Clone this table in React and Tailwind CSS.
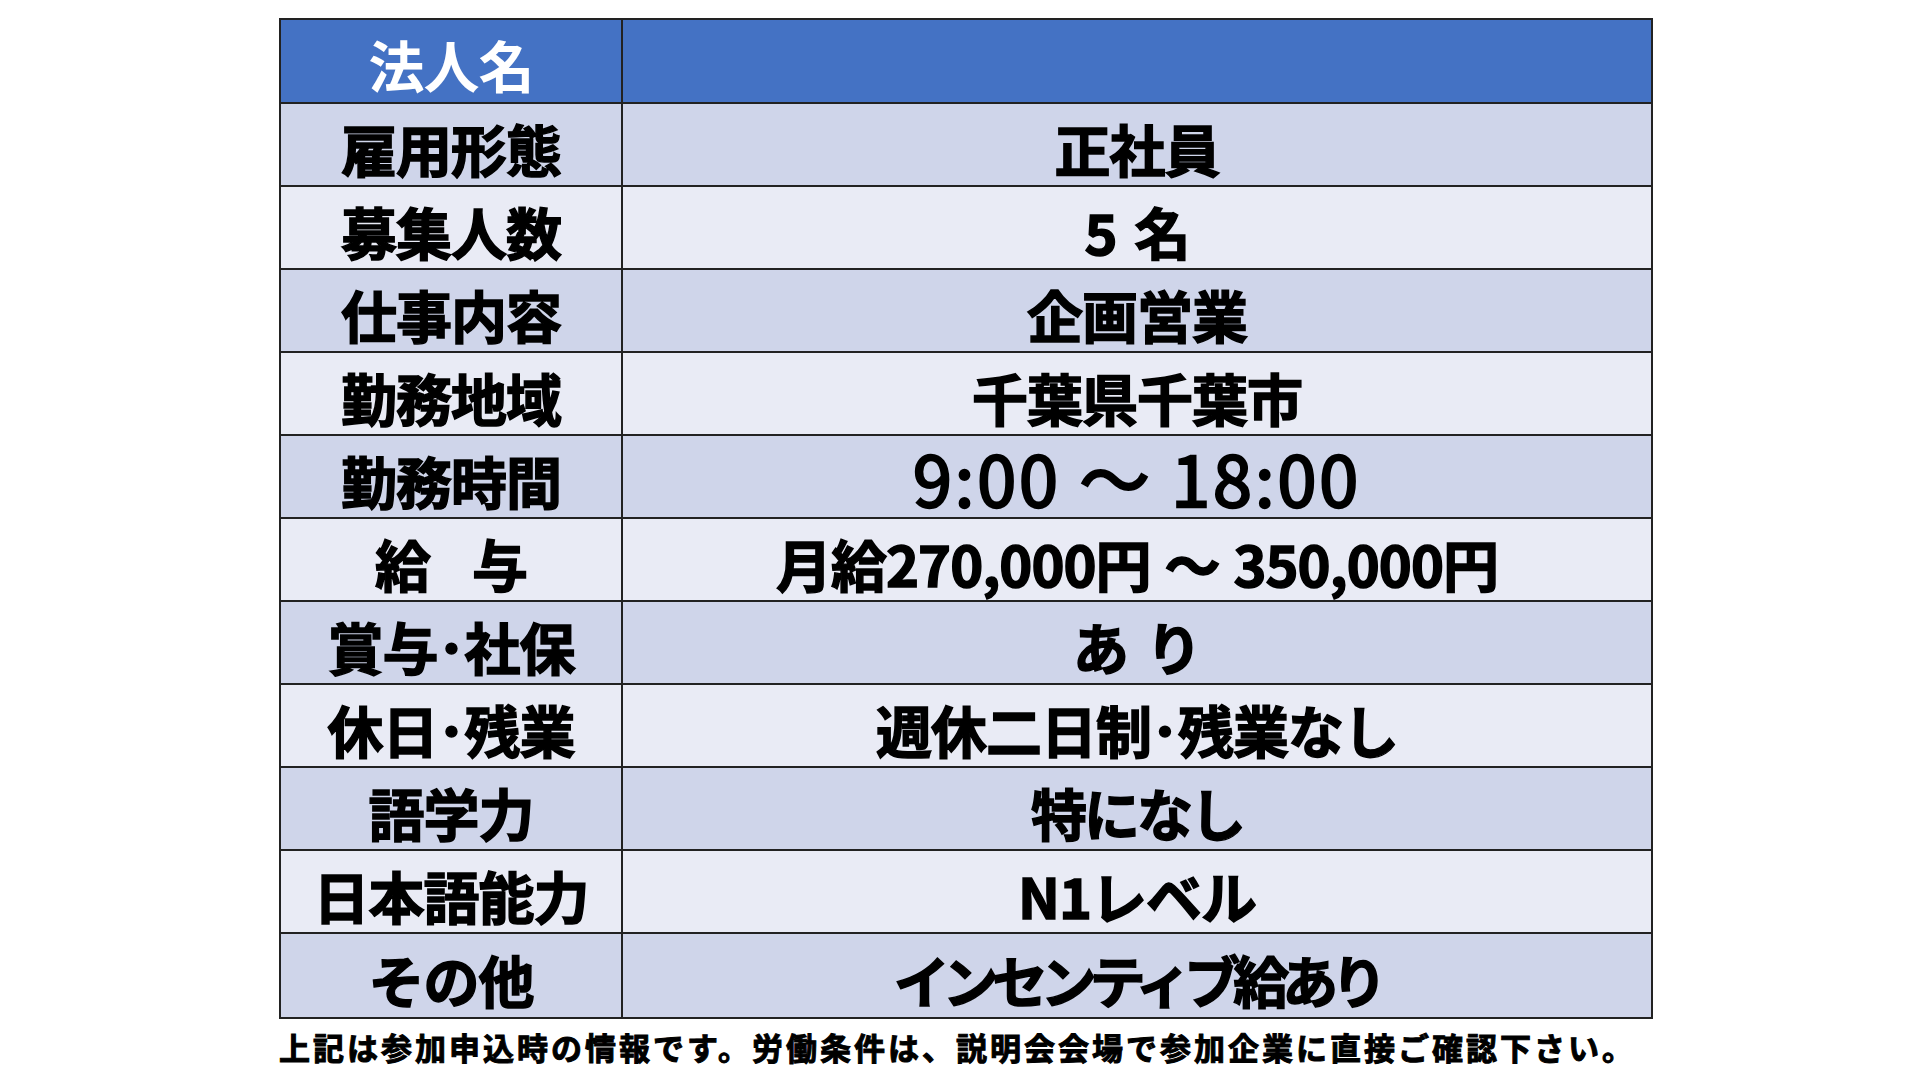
import React from 'react';

const rows = [
  { label: '雇用形態', value: '正社員' },
  { label: '募集人数', value: <>5<span className="ml-[18px]">名</span></> },
  { label: '仕事内容', value: '企画営業' },
  { label: '勤務地域', value: '千葉県千葉市' },
  { label: '勤務時間', value: '9:00 ～ 18:00', time: true },
  { label: <>給<span className="ml-[42px]">与</span></>, value: <>月給270,000円<span className="mx-[14px]">～</span>350,000円</> },
  { label: '賞与･社保', value: <>あ<span className="ml-[18px]">り</span></> },
  { label: '休日･残業', value: '週休二日制･残業なし' },
  { label: '語学力', value: '特になし', cls: 'tracking-[-3px]' },
  { label: '日本語能力', value: 'N1レベル' },
  { label: 'その他', value: 'インセンティブ給あり', cls: 'tracking-[-7px]' },
];

const font = { fontFamily: '"Noto Sans CJK JP", "Noto Sans", sans-serif' };

export default function App() {
  return (
    <div className="w-[1920px] h-[1080px] bg-white overflow-hidden" style={font}>
      <div className="ml-[279px] pt-[18px] w-[1374px]">
        <div className="border-2 border-[#222]">
          {/* header */}
          <div className="grid grid-cols-[342px_1fr] h-[84px] bg-[#4472c4] border-b-2 border-[#222]">
            <div className="flex items-center justify-center border-r-2 border-[#222] pt-[6px] text-white text-[56px] font-bold tracking-[-1px] leading-none">
              法人名
            </div>
            <div />
          </div>

          {rows.map((r, i) => (
            <div
              key={i}
              className={`grid grid-cols-[342px_1fr] h-[83px] ${i % 2 === 0 ? 'bg-[#cfd5ea]' : 'bg-[#e9ebf5]'} ${i < rows.length - 1 ? 'border-b-2 border-[#222]' : ''}`}
            >
              <div className="flex items-center justify-center border-r-2 border-[#222] pt-[6px] text-black text-[56px] font-bold tracking-[-1px] leading-none whitespace-nowrap [-webkit-text-stroke:1.5px_black]">
                {r.label}
              </div>
              {r.time ? (
                <div className="flex items-center justify-center text-black text-[70px] font-normal tracking-[3px] leading-[1] whitespace-nowrap [-webkit-text-stroke:2.5px_black]">
                  {r.value}
                </div>
              ) : (
                <div className={`flex items-center justify-center pt-[6px] text-black text-[56px] font-bold leading-none whitespace-nowrap [-webkit-text-stroke:1.5px_black] ${r.cls || 'tracking-[-1px]'}`}>
                  {r.value}
                </div>
              )}
            </div>
          ))}
        </div>

        <p className="mt-[12px] text-[31px] font-bold tracking-[3px] leading-none text-black whitespace-nowrap [-webkit-text-stroke:1px_black]">
          上記は参加申込時の情報です。労働条件は、説明会会場で参加企業に直接ご確認下さい。
        </p>
      </div>
    </div>
  );
}
